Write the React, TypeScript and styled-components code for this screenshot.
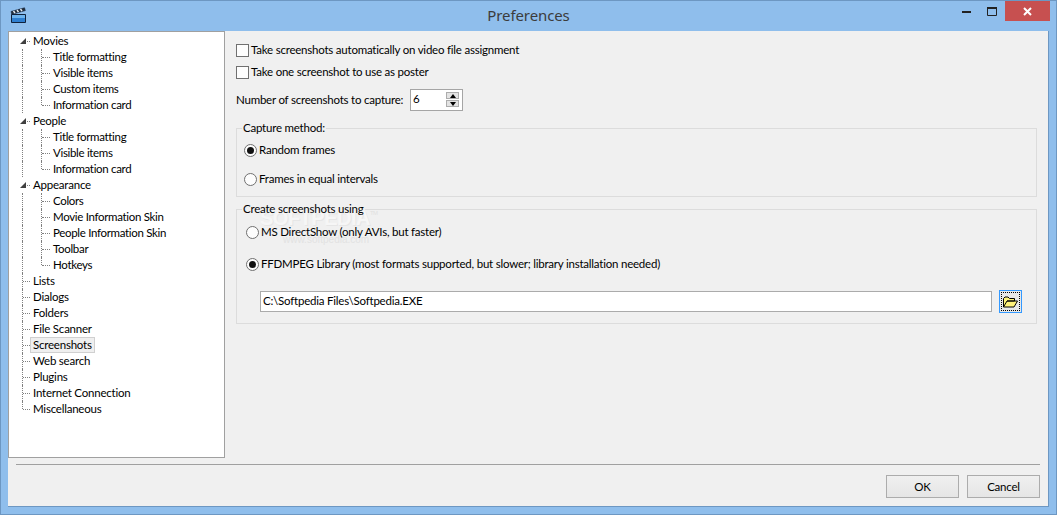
import React from "react";
import styled, { createGlobalStyle } from "styled-components";

const Global = createGlobalStyle`
  html, body { margin: 0; padding: 0; background: #8fbeec; }
  * { box-sizing: border-box; }
`;

const FONT = `Lato, "Noto Sans", sans-serif`;

const Frame = styled.div`
  width: 1057px;
  height: 515px;
  display: flex;
  flex-direction: column;
  background: #8fbeec;
  border: 1px solid #6d97c2;
  font-family: ${FONT};
  font-size: 11.5px;
  letter-spacing: -0.22px;
  color: #000;
  overflow: hidden;
`;

const TitleBar = styled.div`
  height: 30px;
  flex: none;
  position: relative;
  display: flex;
  align-items: center;
  justify-content: center;
  font-family: "Noto Sans", sans-serif;
  font-size: 15px;
  letter-spacing: -0.1px;
  color: #3c3c3c;
  padding-bottom: 3px;
`;

const AppIcon = styled.svg`
  position: absolute;
  left: 9px;
  top: 6px;
`;

const WindowControls = styled.div`
  position: absolute;
  top: 0;
  right: 6px;
  display: flex;
  align-items: flex-start;
`;

const ControlBox = styled.div<{ $w: number }>`
  width: ${(p) => p.$w}px;
  height: 20px;
  display: flex;
  align-items: center;
  justify-content: center;
`;

const CloseBox = styled(ControlBox)`
  background: #c75050;
`;

const Client = styled.div`
  flex: 1;
  margin: 0 7px 7px;
  display: flex;
  flex-direction: column;
  background: #f0f0f0;
  border-right: 1px solid #6d97c2;
  border-bottom: 1px solid #6d97c2;
`;

const Body = styled.div`
  display: flex;
  height: 427px;
  flex: none;
`;

const Tree = styled.div`
  width: 217px;
  flex: none;
  background: #fff;
  border: 1px solid #a0a0a0;
  padding-top: 1px;
`;

const Row = styled.div<{ $level: number }>`
  position: relative;
  height: 16px;
  display: flex;
  padding-left: ${(p) => (p.$level ? 41 : 21)}px;
  letter-spacing: ${(p) => (p.$level ? -0.32 : -0.22)}px;
`;

const Label = styled.span<{ $selected?: boolean }>`
  height: 16px;
  line-height: 14px;
  padding: 0 2px;
  border: 1px solid ${(p) => (p.$selected ? "#d0d0d0" : "transparent")};
  background: ${(p) => (p.$selected ? "#efefef" : "transparent")};
  white-space: nowrap;
`;

const VLine = styled.i<{ $x: number; $half?: boolean }>`
  position: absolute;
  left: ${(p) => p.$x}px;
  top: 0;
  height: ${(p) => (p.$half ? 8 : 16)}px;
  border-left: 1px dotted #808080;
`;

const HLine = styled.i<{ $x: number; $w: number }>`
  position: absolute;
  left: ${(p) => p.$x}px;
  top: 8px;
  width: ${(p) => p.$w}px;
  border-top: 1px dotted #808080;
`;

const Expander = styled.i`
  position: absolute;
  left: 11px;
  top: 5px;
  width: 6px;
  height: 6px;
  background: #404040;
  clip-path: polygon(100% 0, 100% 100%, 0 100%);
`;

const Content = styled.div`
  flex: 1;
  position: relative;
  z-index: 0;
  display: flex;
  flex-direction: column;
  padding: 11px 11px 0;
`;

const Caption = styled.span`
  margin-bottom: 2px;
  white-space: nowrap;
`;

const CheckRow = styled.label`
  display: flex;
  align-items: center;
  height: 16px;
  gap: 2px;
  margin-bottom: 6px;
`;

const Check = styled.input.attrs({ type: "checkbox" })`
  appearance: none;
  width: 13px;
  height: 13px;
  margin: 0;
  background: #fdfdfd;
  border: 1px solid #707070;
`;

const NumberRow = styled.div`
  display: flex;
  align-items: center;
  height: 22px;
  margin-top: 3px;
`;

const NumberLabel = styled(Caption)`
  width: 174px;
  flex: none;
`;

const Spin = styled.div`
  position: relative;
  width: 53px;
  height: 22px;
  background: #fff;
  border: 1px solid #a5a5a5;
  padding-left: 2px;
  line-height: 17px;
`;

const SpinButtons = styled.div`
  position: absolute;
  right: 3px;
  top: 2px;
  display: flex;
  flex-direction: column;
  gap: 1px;
`;

const SpinButton = styled.div<{ $down?: boolean }>`
  width: 13px;
  height: 7px;
  background: #e3e3e3;
  border: 1px solid #acacac;
  display: flex;
  align-items: center;
  justify-content: center;
  &::after {
    content: "";
    width: 0;
    height: 0;
    border-left: 3.5px solid transparent;
    border-right: 3.5px solid transparent;
    ${(p) => (p.$down ? "border-top: 4px solid #000;" : "border-bottom: 4px solid #000;")}
  }
`;

const Group = styled.fieldset<{ $top: number; $left: number; $pad: number; $bottom: number }>`
  margin: ${(p) => p.$top}px 0 0;
  padding: ${(p) => p.$pad}px 14px ${(p) => p.$bottom}px ${(p) => p.$left}px;
  border: 1px solid #dcdcdc;
  min-width: 0;
`;

const Legend = styled.legend<{ $shift: number }>`
  height: 16px;
  line-height: 16px;
  padding: 0 1px;
  margin-left: ${(p) => p.$shift}px;
`;

const RadioRow = styled.label<{ $gap?: number }>`
  display: flex;
  align-items: center;
  height: 16px;
  gap: 2px;
  margin-top: ${(p) => p.$gap ?? 0}px;
`;

const Radio = styled.input.attrs({ type: "radio" })`
  appearance: none;
  width: 13px;
  height: 13px;
  margin: 0;
  border-radius: 50%;
  border: 1px solid #707070;
  background: #fdfdfd;
  display: grid;
  place-items: center;
  &:checked::after {
    content: "";
    width: 7px;
    height: 7px;
    border-radius: 50%;
    background: #111;
  }
`;

const PathRow = styled.div`
  display: flex;
  align-items: center;
  gap: 7px;
  height: 23px;
  margin: 18px 0 0 14px;
`;

const PathInput = styled.div`
  flex: 1;
  height: 21px;
  background: #fff;
  border: 1px solid #ababab;
  padding-left: 2px;
  line-height: 17px;
`;

const BrowseButton = styled.div`
  width: 23px;
  height: 23px;
  background: #e8e8e8;
  border: 1px solid #3399ff;
  padding: 1px;
`;

const FocusRing = styled.div`
  width: 100%;
  height: 100%;
  border: 1px dotted #000;
  display: flex;
  align-items: center;
  justify-content: center;
`;

const Footer = styled.div`
  flex: 1;
  padding: 6px 8px 0 8px;
`;

const Separator = styled.div`
  height: 1px;
  background: #a0a0a0;
`;

const Buttons = styled.div`
  display: flex;
  justify-content: flex-end;
  gap: 8px;
  margin-top: 10px;
`;

const Button = styled.div`
  width: 73px;
  height: 23px;
  display: flex;
  align-items: center;
  justify-content: center;
  padding-bottom: 1px;
  border: 1px solid #acacac;
  background: linear-gradient(#f0f0f0, #e5e5e5);
`;

const Watermark = styled.div`
  position: absolute;
  z-index: -1;
  left: 35px;
  top: 175px;
  font-family: "Liberation Sans", sans-serif;
  font-weight: 700;
  font-size: 20px;
  letter-spacing: -0.5px;
  line-height: 24px;
  color: #f6f6f6;
  text-shadow: 1px 1px 0 #e6e6e6;
`;

const WatermarkMark = styled.sup`
  font-size: 6px;
  font-weight: 400;
  vertical-align: 10px;
  line-height: 0;
  color: #e0e0e0;
  text-shadow: none;
`;

const WatermarkSmall = styled.div`
  position: absolute;
  z-index: -1;
  left: 58px;
  top: 203px;
  font-family: "Liberation Sans", sans-serif;
  font-size: 10px;
  letter-spacing: 0;
  color: #e2e2e2;
`;

type Item = { label: string; children?: string[]; selected?: boolean };

const items: Item[] = [
  { label: "Movies", children: ["Title formatting", "Visible items", "Custom items", "Information card"] },
  { label: "People", children: ["Title formatting", "Visible items", "Information card"] },
  { label: "Appearance", children: ["Colors", "Movie Information Skin", "People Information Skin", "Toolbar", "Hotkeys"] },
  { label: "Lists" },
  { label: "Dialogs" },
  { label: "Folders" },
  { label: "File Scanner" },
  { label: "Screenshots", selected: true },
  { label: "Web search" },
  { label: "Plugins" },
  { label: "Internet Connection" },
  { label: "Miscellaneous" },
];

function TreeView() {
  return (
    <Tree>
      {items.map((it, i) => (
        <React.Fragment key={it.label}>
          <Row $level={0}>
            {it.children ? <Expander /> : <VLine $x={13} $half={i === items.length - 1} />}
            <HLine $x={it.children ? 18 : 14} $w={it.children ? 3 : 7} />
            <Label $selected={it.selected}>{it.label}</Label>
          </Row>
          {it.children?.map((c, j) => (
            <Row $level={1} key={c}>
              <VLine $x={13} />
              <VLine $x={32} $half={j === it.children!.length - 1} />
              <HLine $x={33} $w={8} />
              <Label>{c}</Label>
            </Row>
          ))}
        </React.Fragment>
      ))}
    </Tree>
  );
}

export default function App() {
  return (
    <Frame>
      <Global />
      <TitleBar>
        <AppIcon width="17" height="17" viewBox="0 0 17 17">
          <path d="M1.5 7.5h14v8h-14z" fill="#2f7fd0" stroke="#10223c" />
          <path d="M2 8h13v3H2z" fill="#6db3ee" />
          <path d="M1 4.5 14.5.8l.8 2.8L1.8 7.3z" fill="#25303c" stroke="#10223c" strokeWidth=".6" />
          <path d="M3.5 4 5 6.2M7 3l1.5 2.2M10.5 2l1.5 2.2" stroke="#e8eef5" strokeWidth="1.4" />
        </AppIcon>
        Preferences
        <WindowControls>
          <ControlBox $w={26}>
            <svg width="9" height="3" viewBox="0 0 9 3"><rect width="9" height="2" y="1" fill="#222" /></svg>
          </ControlBox>
          <ControlBox $w={26}>
            <svg width="11" height="9" viewBox="0 0 11 9">
              <path d="M.5 1.5h9v7h-9z" fill="none" stroke="#222" />
              <rect width="10" height="2" fill="#222" />
            </svg>
          </ControlBox>
          <CloseBox $w={45}>
            <svg width="9" height="9" viewBox="0 0 9 9">
              <path d="M1 1l7 7M8 1L1 8" stroke="#fff" strokeWidth="2" />
            </svg>
          </CloseBox>
        </WindowControls>
      </TitleBar>
      <Client>
        <Body>
          <TreeView />
          <Content>
            <Watermark>SOFTPEDIA<WatermarkMark>TM</WatermarkMark></Watermark>
            <WatermarkSmall>www.softpedia.com</WatermarkSmall>
            <CheckRow><Check /><Caption>Take screenshots automatically on video file assignment</Caption></CheckRow>
            <CheckRow><Check /><Caption>Take one screenshot to use as poster</Caption></CheckRow>
            <NumberRow>
              <NumberLabel>Number of screenshots to capture:</NumberLabel>
              <Spin>
                6
                <SpinButtons>
                  <SpinButton />
                  <SpinButton $down />
                </SpinButtons>
              </Spin>
            </NumberRow>
            <Group $top={9} $left={7} $pad={6} $bottom={9}>
              <Legend $shift={-2}>Capture method:</Legend>
              <RadioRow><Radio name="m" defaultChecked /><Caption>Random frames</Caption></RadioRow>
              <RadioRow $gap={13}><Radio name="m" /><Caption>Frames in equal intervals</Caption></RadioRow>
            </Group>
            <Group $top={4} $left={9} $pad={7} $bottom={10}>
              <Legend $shift={-4}>Create screenshots using</Legend>
              <RadioRow><Radio name="c" /><Caption>MS DirectShow (only AVIs, but faster)</Caption></RadioRow>
              <RadioRow $gap={16}><Radio name="c" defaultChecked /><Caption>FFDMPEG Library (most formats supported, but slower; library installation needed)</Caption></RadioRow>
              <PathRow>
                <PathInput>C:\Softpedia Files\Softpedia.EXE</PathInput>
                <BrowseButton>
                  <FocusRing>
                    <svg width="15" height="12" viewBox="0 0 15 12">
                      <path d="M.5 11V2.5L2 1h3l1.5 1.5h5V5H4L.5 11h10.5L14.5 5H4" fill="#fff27a" stroke="#000" />
                    </svg>
                  </FocusRing>
                </BrowseButton>
              </PathRow>
            </Group>
          </Content>
        </Body>
        <Footer>
          <Separator />
          <Buttons>
            <Button>OK</Button>
            <Button>Cancel</Button>
          </Buttons>
        </Footer>
      </Client>
    </Frame>
  );
}
